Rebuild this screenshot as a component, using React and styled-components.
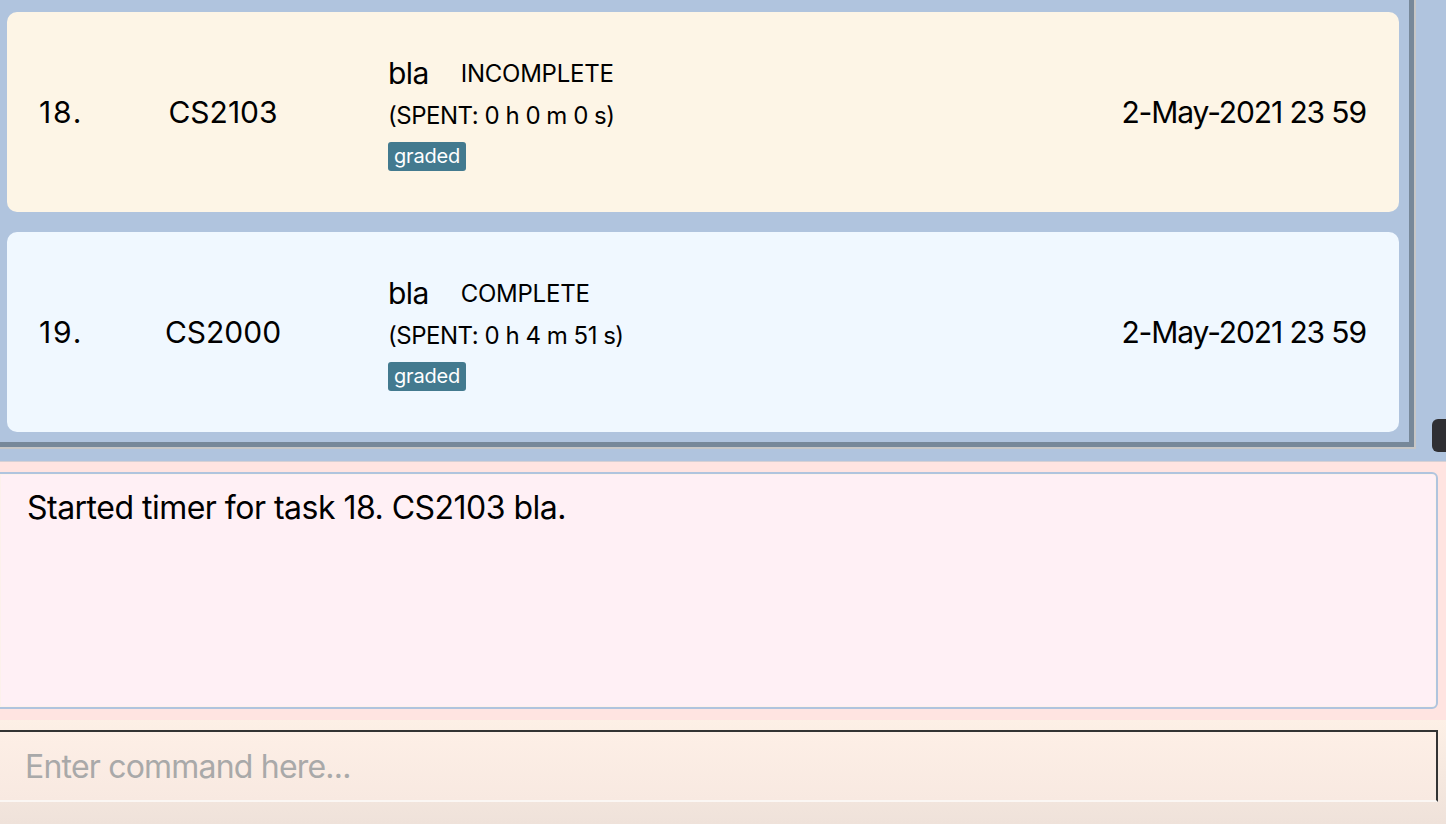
import React from "react";
import styled, { createGlobalStyle } from "styled-components";

const Global = createGlobalStyle`
  html, body { margin: 0; padding: 0; overflow: hidden; }
  body { font-family: Inter, Roboto, sans-serif; color: #000; }
  * { box-sizing: border-box; }
`;

const Page = styled.div`
  width: 1446px;
  height: 824px;
  display: flex;
  flex-direction: column;
  overflow: hidden;
`;

const ListSection = styled.section`
  position: relative;
  height: 462px;
  background: #b0c4de;
  border-bottom: 1px solid #d6d0d4;
`;

const ListFrame = styled.div`
  width: 1416px;
  height: 449px;
  border-right: 2px solid #c6c6c6;
  border-bottom: 2px solid #c6c6c6;
`;

const ListViewport = styled.div`
  height: 100%;
  border-right: 5px solid #778899;
  border-bottom: 5px solid #778899;
  padding: 12px 10px 10px 7px;
  display: flex;
  flex-direction: column;
  gap: 20px;
`;

const Card = styled.div`
  height: 200px;
  border-radius: 10px;
  background: ${(p) => p.$bg};
  display: grid;
  grid-template-columns: 100px 168px 1fr auto;
  align-items: center;
  padding: 0 33px 0 32px;
`;

const Index = styled.div`
  font-size: 30px;
  letter-spacing: 0.06em;
`;

const Code = styled.div`
  font-size: 30px;
  text-align: center;
`;

const Desc = styled.div`
  padding-left: 81px;
  display: flex;
  flex-direction: column;
  align-items: flex-start;
  margin-top: 2px;
`;

const TitleRow = styled.div`
  display: flex;
  align-items: center;
  gap: 32px;
  height: 36px;
`;

const Title = styled.span`
  font-size: 30px;
  letter-spacing: -0.02em;
`;

const Status = styled.span`
  font-size: 24px;
  letter-spacing: -0.01em;
`;

const Spent = styled.div`
  font-size: 24px;
  letter-spacing: -0.02em;
  margin-top: 10px;
  height: 30px;
  line-height: 30px;
`;

const Tag = styled.span`
  margin-top: 11px;
  height: 29px;
  line-height: 29px;
  padding: 0 6px;
  border-radius: 3px;
  background: #437a8f;
  color: #fff;
  font-size: 20px;
  letter-spacing: -0.01em;
`;

const Deadline = styled.div`
  font-size: 30px;
  letter-spacing: -0.037em;
  text-align: right;
`;

const ScrollThumb = styled.div`
  position: absolute;
  right: 0;
  top: 419px;
  width: 14px;
  height: 33px;
  background: #2f2f33;
  border-radius: 6px 0 0 6px;
`;

const ResultSection = styled.section`
  height: 258px;
  background: #ffe4e1;
  padding: 10px 8px 11px 0;
`;

const ResultBox = styled.div`
  height: 100%;
  margin-left: -2px;
  border: 2px solid #b0c4de;
  background: #fff0f5;
  box-shadow: inset 0 0 0 1px #fdf1ec;
  border-radius: 2px 6px 6px 2px;
  padding: 12px 0 0 27px;
  font-size: 32px;
  line-height: 44px;
  letter-spacing: -0.016em;
`;

const CommandSection = styled.section`
  flex: 1;
  background: linear-gradient(#fdf0e6, #efe2da);
  padding-top: 10px;
`;

const CommandInput = styled.input`
  display: block;
  width: 1438px;
  height: 72px;
  border: none;
  border-top: 2px solid #333;
  border-right: 2px solid #333;
  border-bottom: 2px solid #fbf7f4;
  background: linear-gradient(#fdefe6, #f8e9e1);
  padding: 0 0 0 25px;
  font-family: Inter, Roboto, sans-serif;
  font-size: 32px;
  letter-spacing: -0.025em;
  color: #000;
  outline: none;
  &::placeholder { color: #a9a9a9; }
`;

const tasks = [
  { idx: "18.", code: "CS2103", title: "bla", status: "INCOMPLETE", spent: "(SPENT: 0 h 0 m 0 s)", tag: "graded", date: "2-May-2021 23 59", bg: "#fdf5e6" },
  { idx: "19.", code: "CS2000", title: "bla", status: "COMPLETE", spent: "(SPENT: 0 h 4 m 51 s)", tag: "graded", date: "2-May-2021 23 59", bg: "#f0f8ff" },
];

export default function App() {
  return (
    <Page>
      <Global />
      <ListSection>
        <ListFrame>
          <ListViewport>
            {tasks.map((t) => (
              <Card key={t.idx} $bg={t.bg}>
                <Index>{t.idx}</Index>
                <Code>{t.code}</Code>
                <Desc>
                  <TitleRow>
                    <Title>{t.title}</Title>
                    <Status>{t.status}</Status>
                  </TitleRow>
                  <Spent>{t.spent}</Spent>
                  <Tag>{t.tag}</Tag>
                </Desc>
                <Deadline>{t.date}</Deadline>
              </Card>
            ))}
          </ListViewport>
        </ListFrame>
        <ScrollThumb />
      </ListSection>
      <ResultSection>
        <ResultBox>Started timer for task 18. CS2103 bla.</ResultBox>
      </ResultSection>
      <CommandSection>
        <CommandInput placeholder="Enter command here..." />
      </CommandSection>
    </Page>
  );
}
